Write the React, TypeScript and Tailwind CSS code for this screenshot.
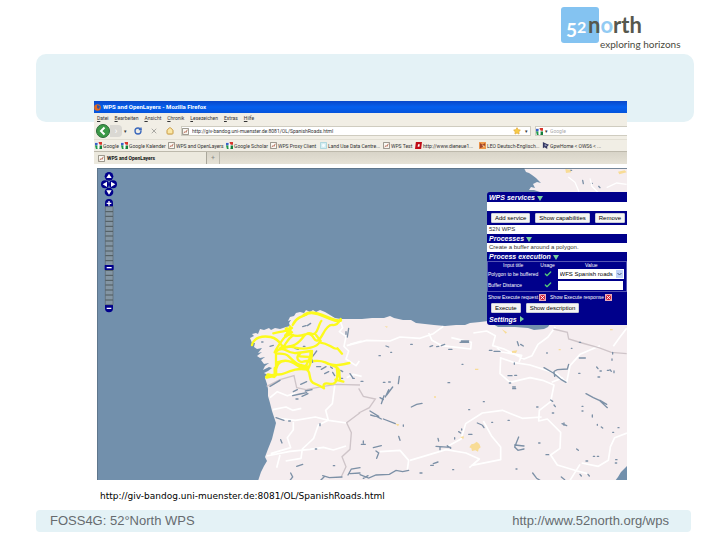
import type { ReactNode } from 'react'
import { Check, Home, RotateCw, Star, X } from 'lucide-react'

const menu = ['Datei', 'Bearbeiten', 'Ansicht', 'Chronik', 'Lesezeichen', 'Extras', 'Hilfe']

const bookmarks = [
  { label: 'Google', icon: 'google', width: 'w-[26px]' },
  { label: 'Google Kalender', icon: 'google', width: 'w-[47px]' },
  { label: 'WPS and OpenLayers', icon: 'page', width: 'w-[58px]' },
  { label: 'Google Scholar', icon: 'google', width: 'w-[44px]' },
  { label: 'WPS Proxy Client', icon: 'page', width: 'w-[50px]' },
  { label: 'Land Use Data Centre...', icon: 'land', width: 'w-[63px]' },
  { label: 'WPS Test', icon: 'page', width: 'w-[32px]' },
  { label: 'http://www.dieneue1...', icon: 'red', width: 'w-[64px]' },
  { label: 'LEO Deutsch-Englisch...', icon: 'leo', width: 'w-[63px]' },
  { label: 'GpwHome < OWS6 < ...', icon: 'gpw', width: 'w-[64px]' },
]

function SiteIcon({ kind }: { kind: string }) {
  return (
    <svg viewBox="0 0 8 8" className="size-[7px] shrink-0" aria-hidden="true">
      {kind === 'google' && (
        <>
          <path d="M0 0h8v8H0z" fill="#f4f4f4" />
          <path d="M0 1h3v3H0z" fill="#3a62c8" />
          <path d="M0 4h3v4H1z" fill="#1f9a48" />
          <path d="M4 0h4v3H5z" fill="#d8362c" />
          <path d="M5 4h3v4H5z" fill="#16803c" />
          <path d="M3 3l2-1v5H3z" fill="#fff" />
        </>
      )}
      {kind === 'page' && (
        <>
          <path d="M.5.5h7v7h-7z" fill="#faf8f2" stroke="#8a867c" />
          <path d="M2 6l1.5-2 1 1L6 2" fill="none" stroke="#b0604c" />
        </>
      )}
      {kind === 'land' && (
        <>
          <path d="M.5.5h7v7h-7z" fill="#d5eef2" stroke="#a6d4dc" />
          <circle cx="4" cy="4" r="1.6" fill="#f7fdff" />
        </>
      )}
      {kind === 'red' && (
        <>
          <path d="M1 0h7L7 8H0z" fill="#c00d18" />
          <path d="M3.5 2.5h2l-.5 3H3z" fill="#fff" />
        </>
      )}
      {kind === 'leo' && (
        <>
          <path d="M0 0h8v8H0z" fill="#ef9a4c" />
          <path d="M1 1l3 2 3-2v3L4 6 1 7z" fill="#a2442a" />
          <path d="M3 4h3v2z" fill="#fbe6bd" />
        </>
      )}
      {kind === 'gpw' && (
        <>
          <path d="M1 0l4 2 3 1-2 2v3L3 6 1 7z" fill="#333761" />
          <path d="M3 2l3 2-3 1z" fill="#9296b4" />
        </>
      )}
    </svg>
  )
}

function Logo() {
  return (
    <svg width="126" height="46" viewBox="0 0 126 46" role="img" aria-label="52north exploring horizons">
      <rect x="1" y="0" width="38" height="36" rx="3" fill="#84c3f1" />
      <g fontFamily="Lato, 'Open Sans', sans-serif" fontWeight="700">
        <text x="6" y="30" fontSize="19" fill="#fff">5</text>
        <text x="17" y="26" fontSize="16" fill="#fff">2</text>
        <text x="28" y="26" fontSize="22" fill="#56584e">
          n<tspan fill="#92cbf3">o</tspan>rth
        </text>
      </g>
      <text x="40" y="41" fontSize="10" fontFamily="Lato, 'Open Sans', sans-serif" fill="#4a4a40">
        exploring horizons
      </text>
    </svg>
  )
}

function SpainMap() {
  return (
    <svg viewBox="0 0 1590 939" preserveAspectRatio="xMinYMin slice" className="block h-full w-full" aria-label="Map of northern Spain">
      <rect width="2400" height="939" fill="#7290ac" />
      {/* Iberian mainland and the French coast */}
      <g transform="scale(3) translate(-97 -167)">
        <path
          d="M258 480L261 471L264 465L267 460L265 456L268 448L272 438L274 430L276 422L274 416L272 410L270 402L268 395L268 388L267 383L265 377L268 374L264 372L268 370L272 367L269 366L263 369L265 365L269 362L264 363L261 359L265 356L260 357L257 355L262 351L258 352L262 347L257 348L254 346L255 342L252 342L250 337L254 335L252 333L256 332L258 333L260 328L264 329L269 327L271 329L275 327L280 328L286 326L290 325L289 322L291 319L288 320L290 316L294 315L296 312L300 311L304 312L306 309L310 311L313 309L316 311L320 309L325 311L330 314L335 317L341 318L362 318L372 317L384 317L390 315L394 317L403 319L411 319L416 322L425 323L434 324L445 325L456 324L465 324L470 322L480 321L488 320L498 326L515 326L528 327L534 329L544 328L548 326L552 320V200L540 191L534 189L529 189L531 186L535 187L533 183L537 181L541 182L536 177L532 174L529 172L526 171L524 167H820V465H627L621 471L618 476L615 480Z"
          fill="#f5edef"
        />
      </g>
      <g fill="none" stroke="#fff" strokeWidth="5" strokeLinejoin="round">
        {/* province borders, west */}
        <g transform="translate(-21 399)">
          <path d="M750 58l8 22-10 12 20 14-6 30 14 14-8 24 30 20 10-14M780 130l35-10M770 230l20-10 25 6M735 248l-8 60-20 20 8 30-30 14-14 40-34 32-4 28-46 8M540 290l22-18 30 12 24-8M548 326l40-8 20 10 26-6M566 352l50 6 60-10 40 10 54 8M610 362v24l-18 24 10 30-60 18M530 465l70-14 60-6 40-6 30 8 38-12M560 500l10-38" />
        </g>
        {/* province borders, east */}
        <g transform="translate(789 399)">
          <path d="M-40 134L20 118l70 2 30-12 60 4 40-14 30-22M206 96l10 22 30 16 86 10 2-20-60-14M340 96l40-6 26 14-8 30 34 10 60 30 24-10 18-34 30-22 22-30M405 135l20 18 60 10-8 20M422 168l-2 50 30 26 60-14 38 8 34 14-10 50-34 26-2 32 26-6 40 40-2 48-28 20 20 30 60 18 30 8M420 170l40 14 50 8 80 26 30 26 10-50 30-34 60-26M575 244l34-14M545 348l-58 4-60-24-60 8-50 32-14 46-40 22M370 360l24 44 28 34v38l-90 18M150 478l48-14 60-18 60 10 40 18-30 26M60 452l60-4 26 30-4 28M750 440l14-30 37-14M660 490l-30 48M665 486l50 10 30-18 6-38M760 136l20-28 20-26" />
        </g>
      </g>
      <g fill="none" stroke="#cfc5c9" strokeWidth="4">
        <path transform="translate(-21 399)" d="M530 256l40-20 42-12 8 36 28 6 52-10 40-6 70 2M810 335l-40 30 14 30-4 50-24 22 12 30-14 30" />
        <path transform="translate(789 399)" d="M-4 262l14 24 36 8-18 26-32 16M580 84l42 10 4 20 40 12 50 14 38 14 46 4" />
      </g>
      {/* lakes and reservoirs */}
      <g fill="none" stroke="#7c90a6" strokeWidth="4" strokeLinecap="round">
        <g transform="translate(-21 399)">
          <path d="M638 77l10-3M652 74l10-7M772 108l4-26M768 92v8M515 123h4M540 136l10-3M615 142l10 3M640 136h5M668 166l12-16M666 176l2 8M680 197h12M694 205l14-8M704 218l12-6M722 198l5 4M728 214l6 10M752 208l6 4M750 232h8M780 218l8 12M788 232h5M632 250l18-8M610 272l12-6M608 284l22-5 20-4M646 270l20-4M618 294h6M636 286l18-8M540 256l30-18M558 350l24 8M596 360h5M690 368v6M572 416l4 10M676 444h4M620 496l18-6M730 494h4M602 516l6 12-8 10M698 524l20 6 38-2M692 538l10-10M774 522l10-18 26-4M780 518l30-2" />
        </g>
        <g transform="translate(789 399)">
          <path d="M78 135l8 3M92 154h3M57 164h4M152 130h5M210 137l8-3M230 137l6-1M244 134l10-4M266 145h10M300 124h26M304 120h22M388 148h8M402 151h18M472 122l4 12M482 130l8 5M463 186v4M306 190h3M264 245h5M70 244h5M86 243h5M3 241h6M118 226l-3 22M98 258l-18 24M86 266l-10 22M72 284l-8 24M60 290l10 6M154 318l16-8 16-3M30 330l26 16M32 342l14 4M50 346l14 8M70 354l36 14M130 372v4M116 406l4 12M40 440l24-6M48 450l8 6-6 16M4 430h12M10 420v6M0 521l26 10 22-9 40-2 20-12 20 4 18-4M10 532l14-8M234 412l2 8M228 436l44 3M262 434l10 8M240 438v8M284 410v4M296 392l6 4M326 400h10M305 384v3M352 366l14 6M368 374l4 6M370 302h3M444 224h12M464 223h6M458 258h8M458 263h9M448 246h4M326 326h3M395 364h3M444 358h4M476 408l-12 30 10 10 18-4M464 432l28 3M536 426h4M558 461h8M552 200l28 16 24 20 14 8M584 210l8-4 30-2 4-14M582 212l2 14M560 156h2M634 142h2M658 124h4M658 171h18M656 217h4M710 198l4 5M720 210h4M714 228h5M742 208h5M750 206l4 5M762 210v5M756 174v4M758 154v5M678 278l22 12 18 8 24 22M720 298l20 12M572 297l6 4M582 312l4 5M577 336h4M530 318h4M606 368l14 6M612 366v7M666 330h3M697 342v6M712 370v3M724 378l4 3M758 394h3M666 316h3M774 380h3M650 444l5 4M700 466h4M712 466h4M678 480h5M767 476h4M766 486h4M660 520l4 5M684 520l4 5M518 516l12 16 10 6M604 528l10 8M468 504h3M278 506h3M212 493h8M220 488l14-5M180 516h6" />
        </g>
        <path transform="translate(1149 -21)" d="M334 67h3M308 58l2 10M356 76l4 4M270 28h5" />
      </g>
      <g fill="#f8dc96">
        <path transform="translate(789 399)" d="M334 430l8-2 8-6 8 7 4 10-6 5-2 8-8-4-10 2-2-8-6-3zM300 408l12-2-2 8zM456 150l16-2-4 8-12-1zM425 84l16 10-4 4zM345 203h10v4h-10zM596 144h6v4h-6zM106 368l12 2-4 6zM222 286h6v4h-6zM750 84h8v4h-8zM74 75l10 2-4 3z" />
        <path transform="translate(1149 -21)" d="M256 24l14 2 4 8-16 2zM414 32l20-4 6 6-22 6z" />
      </g>
      <path transform="translate(1149 -21)" d="M265 48l20 16 12 28M330 52l6 24 20 20M380 80l30-14 30 4" fill="none" stroke="#fff" strokeWidth="4" />
      {/* road layer returned by the service */}
      <g transform="translate(429 399)" fill="none" stroke="#fcfa1c" strokeWidth="7" strokeLinejoin="round" strokeLinecap="round">
        <path d="M158 72q8-16 20-22t22-10M36 132q4-16 20-22t36-2 34 26M100 97q18-4 30-6t26-10M154 80q-4 12-14 22t-22 28-14 24M140 90q8 12 24 14t32-4 26 12 26-12 30-28 24-18M160 102q-14 10-22 24t-18 16q22-2 38-8t30-24 26-12 20-16 10-22M122 140q20-6 44 0t46 0 26-16q18 2 34 12t20 6l14 16M242 120l-14-18M108 152q14-14 30-4t32 8 42-6q0 16-4 24t-10 20M112 158q24-2 34 8t20 18 36 12M108 150v70M112 184q20-8 34-4t30 10 26 12M110 200q4-18 22-20t38 12 34 10M182 156q-14 10-8 20t16 6 22 0M180 166l28 2M216 150q0 20-4 34t-10 24M222 180q20-2 34 4t28 12 14 16 2 24M262 188q20 6 34 4t32-6M290 200q4 20 0 36t-24 12-14 14q-16-10-28-14t-14-20-10-26M204 206q-22-4-38 0t-30 10-26 4M144 84l12 10M150 76l-4 26M286 236l24 6" />
        <path d="M192 42q14-8 28-6t24 6 30 12 28 4" strokeWidth="9" />
        <path d="M80 228l26-6v-20M84 222l18 4" strokeWidth="11" />
        <path d="M140 84l8 10-10 10" strokeWidth="12" />
      </g>
      <path d="M1 939V1h1589" fill="none" stroke="#5b7186" strokeWidth="3" />
    </svg>
  )
}

function PanZoomBar() {
  return (
    <svg viewBox="0 0 48 426" className="absolute top-1 left-1 h-[142px] w-4" aria-label="Pan and zoom">
      <g fill="#00008b">
        <circle cx="24" cy="13" r="13" />
        <circle cx="12" cy="37" r="12" />
        <circle cx="36" cy="37" r="12" />
        <circle cx="24" cy="60" r="13" />
        <path d="M12 104V93a12 12 0 0124 0v11zM12 398v11a12 12 0 0024 0v-11z" />
      </g>
      <g fill="#fff">
        <path d="M24 5l8 13H16zM24 68l8-13H16zM5 37l13-8v16zM43 37l-13-8v16z" />
        <path d="M22 87h4v5h5v4h-5v5h-4v-5h-5v-4h5zM17 407h14v4H17z" />
      </g>
      <path d="M13 104h23v294H13z" fill="#8496a4" stroke="#5e686c" strokeWidth="2" />
      <path
        d="M13 119h23M13 133h23M13 148h23M13 163h23M13 178h23M13 192h23M13 207h23M13 222h23M13 237h23M13 251h23M13 266h23M13 295h23M13 310h23M13 325h23M13 339h23M13 354h23M13 369h23M13 384h23"
        stroke="#4d585c"
        strokeWidth="3"
      />
      <rect x="11" y="279" width="27" height="15" rx="2" fill="#00008b" />
      <path d="M17 287h15" stroke="#fff" strokeWidth="4" />
    </svg>
  )
}

function PanelTitle({ children, closed = false }: { children: ReactNode; closed?: boolean }) {
  return (
    <h2 className="flex h-[9px] items-center gap-0.5 pl-0.5 text-[7px] leading-[9px] font-bold text-white italic">
      {children}
      <svg viewBox="0 0 6 6" className="size-1.5" aria-hidden="true">
        <path d={closed ? 'M1 0l4 3-4 3z' : 'M0 1h6L3 6z'} fill="#7ad0a0" />
      </svg>
    </h2>
  )
}

function PanelButton({ children }: { children: ReactNode }) {
  return (
    <button type="button" className="h-[10px] shrink-0 rounded-[1px] border border-[#c8ccd8] bg-[#f5f5f3] px-[3px] text-[6px] leading-[8px] whitespace-nowrap text-black">
      {children}
    </button>
  )
}

function ToggleBox({ label }: { label: string }) {
  return (
    <label className="flex items-center gap-px">
      {label}
      <span className="relative size-[7px]">
        <input type="checkbox" className="block size-[7px] appearance-none border border-[#e6aab8] bg-[#d02840]" />
        <X className="pointer-events-none absolute inset-0 size-[7px] text-white" strokeWidth={3} />
      </span>
    </label>
  )
}

function WpsPanel() {
  return (
    <aside className="absolute top-6 right-0 w-[140px] overflow-hidden rounded-l-[3px] bg-[#00008b] py-px font-['Liberation_Sans',Arial,sans-serif] text-white">
      <PanelTitle>WPS services</PanelTitle>
      <input aria-label="Service address" className="block h-[9px] w-full bg-white" />
      <div className="flex gap-[5px] py-0.5 pl-1">
        <PanelButton>Add service</PanelButton>
        <PanelButton>Show capabilities</PanelButton>
        <PanelButton>Remove</PanelButton>
      </div>
      <div className="h-[9px] bg-white pl-0.5 text-[6px] leading-[9px] text-[#333]">52N WPS</div>
      <PanelTitle>Processes</PanelTitle>
      <div className="h-[9px] bg-white pl-0.5 text-[6px] leading-[9px] text-[#333]">Create a buffer around a polygon.</div>
      <PanelTitle>Process execution</PanelTitle>
      <table className="w-full table-fixed border-collapse border border-[#5656b4] text-[5px] leading-[6px]">
        <thead>
          <tr>
            <th className="w-[51px] p-0 font-normal">Input title</th>
            <th className="w-[18px] p-0 font-normal">Usage</th>
            <th className="p-0 font-normal">Value</th>
          </tr>
        </thead>
        <tbody>
          <tr className="h-3">
            <td className="p-0 whitespace-nowrap"><label htmlFor="polygon">Polygon to be buffered</label></td>
            <td className="p-0"><Check className="mx-auto size-2 text-[#55c878]" strokeWidth={4} /></td>
            <td className="p-0 pl-px">
              <div className="relative w-[66px]">
                <select id="polygon" className="block h-[10px] w-full appearance-none bg-white pl-0.5 text-[6px] leading-[10px] text-black">
                  <option>WFS Spanish roads</option>
                </select>
                <svg viewBox="0 0 7 8" className="pointer-events-none absolute top-px right-px h-2 w-[7px]" aria-hidden="true">
                  <path d="M0 0h7v8H0z" fill="#c1d2f8" />
                  <path d="M1.5 3l2 2 2-2" fill="none" stroke="#4a6080" />
                </svg>
              </div>
            </td>
          </tr>
          <tr className="h-[11px]">
            <td className="p-0"><label htmlFor="distance">Buffer Distance</label></td>
            <td className="p-0"><Check className="mx-auto size-2 text-[#55c878]" strokeWidth={4} /></td>
            <td className="p-0 pl-px"><input id="distance" className="block h-[9px] w-[65px] bg-white text-[6px] text-black" /></td>
          </tr>
        </tbody>
      </table>
      <div className="flex h-[11px] items-center gap-1 pl-px text-[5px] whitespace-nowrap">
        <ToggleBox label="Show Execute request" />
        <ToggleBox label="Show Execute response" />
      </div>
      <div className="flex gap-[5px] pl-1">
        <PanelButton>Execute</PanelButton>
        <PanelButton>Show description</PanelButton>
      </div>
      <div className="pt-0.5">
        <PanelTitle closed>Settings</PanelTitle>
      </div>
    </aside>
  )
}

function Browser() {
  return (
    <section className="font-['Liberation_Sans_Narrow',Roboto,sans-serif] text-[5px] leading-[8px] text-[#333]">
      <header className="flex h-3 items-center gap-0.5 bg-gradient-to-b from-[#0a48c8] via-[#0560ee] to-[#0554dc] text-[6px] font-bold text-white">
        <svg viewBox="0 0 7 7" className="size-[7px]" aria-hidden="true">
          <circle cx="3.5" cy="3.5" r="3.3" fill="#e2681c" />
          <path d="M3 1l3 1-1 3-2-1z" fill="#3252a8" />
        </svg>
        <h1>WPS and OpenLayers - Mozilla Firefox</h1>
      </header>
      <div className="bg-[#f1eee5]">
        <nav className="flex h-[10px] items-center gap-[6px] pl-[3px]">
          {menu.map((item) => (
            <button key={item} type="button" className="first-letter:underline">{item}</button>
          ))}
        </nav>
        <div className="flex h-4 items-center">
          <button type="button" aria-label="Back" className="ml-0.5 shrink-0">
            <svg viewBox="0 0 14 14" className="size-3.5">
              <circle cx="7" cy="7" r="6.5" fill="#3c9a48" stroke="#2b6b38" />
              <path d="M8.500 3.500L5 7l3.500 3.500" fill="none" stroke="#fff" strokeWidth="2" />
            </svg>
          </button>
          <button type="button" aria-label="Forward" className="h-3 w-3 shrink-0 rounded-r bg-[#dad8d3] text-[9px] leading-3 text-white">›</button>
          <span className="w-3 pl-0.5">▾</span>
          <button type="button" aria-label="Reload"><RotateCw className="size-2 text-[#3b68bc]" strokeWidth={4} /></button>
          <button type="button" aria-label="Stop" className="ml-2"><X className="size-2 text-[#aaa9a4]" strokeWidth={3} /></button>
          <button type="button" aria-label="Home" className="ml-2"><Home className="size-2 fill-[#fbe7a6] text-[#c89a44]" strokeWidth={3} /></button>
          <div className="ml-[7px] flex h-[10px] min-w-0 flex-1 items-center border border-[#cfccc0] bg-white pr-0.5">
            <SiteIcon kind="page" />
            <input aria-label="Address" defaultValue="http://giv-bandog.uni-muenster.de:8081/OL/SpanishRoads.html" className="ml-[3px] h-2 min-w-0 flex-1 bg-transparent text-[5px]" />
            <Star className="size-2 fill-[#f8cc48] text-[#e0a838]" />
            <span className="ml-1">▾</span>
          </div>
          <div className="ml-1 flex h-[10px] w-[92px] items-center border border-r-0 border-[#cfccc0] bg-white">
            <SiteIcon kind="google" />
            <span className="w-[7px] pl-0.5">▾</span>
            <input aria-label="Search" placeholder="Google" className="h-2 min-w-0 flex-1 text-[5px] placeholder:text-[#aaa]" />
          </div>
        </div>
        <nav className="flex h-3 items-center overflow-hidden border-t border-[#e2dfd4] pl-px">
          {bookmarks.map((b) => (
            <a key={b.label} href="#" className={`flex shrink-0 items-center gap-px whitespace-nowrap ${b.width}`}>
              <SiteIcon kind={b.icon} />
              {b.label}
            </a>
          ))}
        </nav>
        <div className="flex h-[13px] items-end border-t border-[#bdb9ac] bg-gradient-to-b from-[#d8d4c8] to-[#e6e2d6]">
          <button type="button" className="flex h-3 w-[113px] items-center gap-0.5 border-r border-[#aaa79b] bg-[#ece9de] pl-1 font-bold text-[#111]">
            <SiteIcon kind="page" />
            WPS and OpenLayers
          </button>
          <button type="button" aria-label="New tab" className="h-3 w-[13px] border-r border-[#bbb8ac] text-[7px] text-[#888]">+</button>
        </div>
      </div>
      <div className="bg-white pt-1 pl-[3px]">
        <div className="relative h-[312px] overflow-hidden">
          <SpainMap />
          <PanZoomBar />
          <WpsPanel />
        </div>
      </div>
    </section>
  )
}

export default function App() {
  return (
    <div className="bg-white pt-[7px] pb-2 font-['Liberation_Sans',Arial,sans-serif]">
      <div className="flex h-[47px] justify-end pr-[34px]">
        <Logo />
      </div>
      <div className="mr-[26px] ml-9 h-[68px] rounded-[10px] bg-[#e4f2f6]" />
      <main className="relative -mt-[21px] mr-[93px] ml-[94px]">
        <Browser />
        <p className="mt-[9px] ml-1.5 font-['DejaVu_Sans',Verdana,sans-serif] text-[9px] leading-[14px] text-black">
          http://giv-bandog.uni-muenster.de:8081/OL/SpanishRoads.html
        </p>
      </main>
      <footer className="mt-[7px] mr-[29px] ml-9 flex h-[22px] items-center justify-between rounded bg-[#e4f2f6] pr-[22px] pl-3.5 text-[13px] text-[#666b6f]">
        <span>FOSS4G: 52°North WPS</span>
        <a href="http://www.52north.org/wps">http://www.52north.org/wps</a>
      </footer>
    </div>
  )
}
